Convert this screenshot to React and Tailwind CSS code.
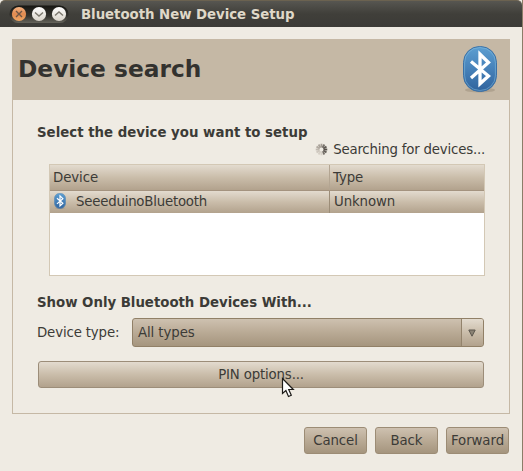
import React from "react";

const raised = "bg-linear-to-b from-[#e3dbcf] via-[#cabdaa] to-[#b2a28d]";
const pressed = "bg-linear-to-b from-[#cec1b0] via-[#b9aa95] to-[#a5957e]";

function Rune({ width }) {
  return (
    <path
      d="M8 15.5 25.5 30 17 37.8V8.2L25.5 16.5 8 32"
      fill="none"
      stroke="#fff"
      strokeWidth={width}
      strokeLinejoin="miter"
    />
  );
}

function BluetoothIcon({ className, id, width = 3.3 }) {
  return (
    <svg className={className} viewBox="0 0 34 47">
      <defs>
        <linearGradient id={id} x1="0" y1="0" x2="0" y2="1">
          <stop offset="0" stopColor="#5d9fd1" />
          <stop offset="0.5" stopColor="#4681b9" />
          <stop offset="1" stopColor="#30639d" />
        </linearGradient>
      </defs>
      <ellipse cx="17" cy="44" rx="15" ry="2.5" fill="#a09280" opacity="0.6" />
      <rect x="0.5" y="0.5" width="33" height="45" rx="16" fill={`url(#${id})`} stroke="#3a70a6" />
      <rect x="1.6" y="1.6" width="30.8" height="42.8" rx="15" fill="none" stroke="#83bbdc" strokeOpacity="0.55" />
      <Rune width={width} />
    </svg>
  );
}

function WindowControls() {
  return (
    <svg className="ml-[9px] h-[19px] w-[60px] shrink-0" viewBox="0 0 60 19">
      <defs>
        <linearGradient id="well" x1="0" y1="0" x2="0" y2="1">
          <stop offset="0" stopColor="#171713" />
          <stop offset="0.6" stopColor="#34332e" />
          <stop offset="1" stopColor="#66645b" />
        </linearGradient>
        <linearGradient id="close" x1="0" y1="0" x2="0" y2="1">
          <stop offset="0" stopColor="#f5b382" />
          <stop offset="0.5" stopColor="#e08a50" />
          <stop offset="1" stopColor="#f0a763" />
        </linearGradient>
        <linearGradient id="light" x1="0" y1="0" x2="0" y2="1">
          <stop offset="0" stopColor="#ffffff" />
          <stop offset="1" stopColor="#d9d3c9" />
        </linearGradient>
      </defs>
      <rect x="0.5" y="0.5" width="59" height="17.5" rx="8.75" fill="url(#well)" />
      <circle cx="10" cy="9" r="7.1" fill="url(#close)" />
      <circle cx="30" cy="9" r="7.1" fill="url(#light)" />
      <circle cx="50" cy="9" r="7.1" fill="url(#light)" />
      <g fill="none" stroke="#7b776d" strokeWidth="1.4">
        <path d="m7 6 6 6m0-6-6 6" stroke="#6e5646" />
        <path d="m26 7.5 4 3.5 4-3.5" />
        <path d="m46 10.5 4-3.5 4 3.5" />
      </g>
    </svg>
  );
}

function Spinner() {
  const shades = ["#a39c93", "#77716a", "#5f5a54", "#55504a", "#625d57", "#77716a", "#d8d2c9", "#d6cfc6", "#cec7be", "#c0b9b0", "#b0a9a0", "#a9a299"];
  return (
    <svg className="mr-[5px] mb-[2px] h-[13px] w-[13px]" viewBox="0 0 14 14">
      {shades.map((c, i) => (
        <path key={i} d="M7 .8v4" stroke={c} strokeWidth="2" transform={`rotate(${i * 30} 7 7)`} />
      ))}
    </svg>
  );
}

function Button({ children }) {
  return (
    <button className={`flex h-[27px] w-[63px] items-center justify-center rounded-[3px] border border-[#9c8c75] tracking-[-0.08px] ${pressed}`}>
      <span className="pt-px">{children}</span>
    </button>
  );
}

export default function App() {
  return (
    <div className="relative flex h-[471px] w-[523px] flex-col overflow-hidden border-r border-[#8b7d68] bg-[#efebe3] font-['DejaVu_Sans',sans-serif] text-[13.33px] leading-4 whitespace-nowrap text-[#3c3b37]">
      <header className="flex h-[27px] shrink-0 items-center rounded-t-[5px] border-t border-[#6b6250] bg-linear-to-b from-[#575651] via-[#403f3a] to-[#3c3b37]">
        <WindowControls />
        <h1 className="ml-3 pt-[2px] font-bold tracking-[-0.04px] text-[#dfd8c8]">Bluetooth New Device Setup</h1>
      </header>

      <main className="mt-3 ml-3 flex h-[375px] w-[498px] shrink-0 flex-col border border-[#c5b8a5]">
        <div className="flex h-[60px] shrink-0 items-center justify-between bg-[#c5b8a5] pr-[12px] pb-px pl-[5px]">
          <h2 className="pb-[2px] text-[23.3px] leading-7 font-bold text-[#33322f]">Device search</h2>
          <BluetoothIcon className="h-[47px] w-[34px]" id="large" />
        </div>

        <div className="flex flex-col pr-[25px] pl-6">
          <h3 className="mt-[25px] font-bold">Select the device you want to setup</h3>
          <div className="mt-px -mr-px flex h-4 items-center justify-end">
            <Spinner />
            <span className="tracking-[-0.2px]">Searching for devices...</span>
          </div>

          <div className="mt-[6px] ml-3 flex h-[112px] w-[436px] flex-col border border-[#d3c8b5] bg-white">
            <div className={`flex h-[26px] border-b border-[#a4937f] ${raised}`}>
              <div className="flex w-[280px] items-center border-r border-[#b3a592] pl-[3px] tracking-[-0.1px]">Device</div>
              <div className="flex items-center pl-[3px] tracking-[-0.1px]">Type</div>
            </div>
            <div className={`flex h-[22px] ${raised}`}>
              <div className="flex w-[280px] items-center border-r border-[#9c8d78] pl-1">
                <BluetoothIcon className="mb-[2px] h-4 w-3" id="small" width={3.5} />
                <span className="ml-[10px] tracking-[-0.22px]">SeeeduinoBluetooth</span>
              </div>
              <div className="flex items-center pl-1 tracking-[-0.12px]">Unknown</div>
            </div>
          </div>

          <h3 className="mt-[19px] font-bold tracking-[-0.02px]">Show Only Bluetooth Devices With...</h3>
          <div className="mt-[7px] flex h-[29px] items-center">
            <span className="w-[95px] tracking-[-0.15px]">Device type:</span>
            <div className={`flex h-[29px] w-[352px] overflow-hidden rounded-[3px] border border-[#918067] ${pressed}`}>
              <span className="flex flex-1 items-center pt-px pl-[5px] tracking-[-0.1px]">All types</span>
              <span className={`flex w-[22px] items-center justify-center border-l border-[#93836c] ${raised}`}>
                <svg className="mr-[2px] h-2 w-2" viewBox="0 0 8 8">
                  <path d="M.8 1h6.4L4 7.2Z" fill="#8b8375" stroke="#5c574e" />
                </svg>
              </span>
            </div>
          </div>
          <button className={`mt-[14px] ml-px flex h-[27px] w-[446px] items-center justify-center rounded-[3px] border border-[#9c8d79] tracking-[-0.16px] ${raised}`}>
            PIN options...
          </button>
        </div>
      </main>

      <footer className="mt-[13px] flex justify-end gap-2 pr-[13px]">
        <Button>Cancel</Button>
        <Button>Back</Button>
        <Button>Forward</Button>
      </footer>

      <svg className="absolute top-[377px] left-[281px] h-[21px] w-[14px]" viewBox="0 0 14 21">
        <path d="M1.5 1.5v15l3.4-3 2.6 6 2.8-1.2-2.6-5.8h4.6Z" fill="#fff" stroke="#1d1b18" strokeWidth="1.2" />
      </svg>
    </div>
  );
}
